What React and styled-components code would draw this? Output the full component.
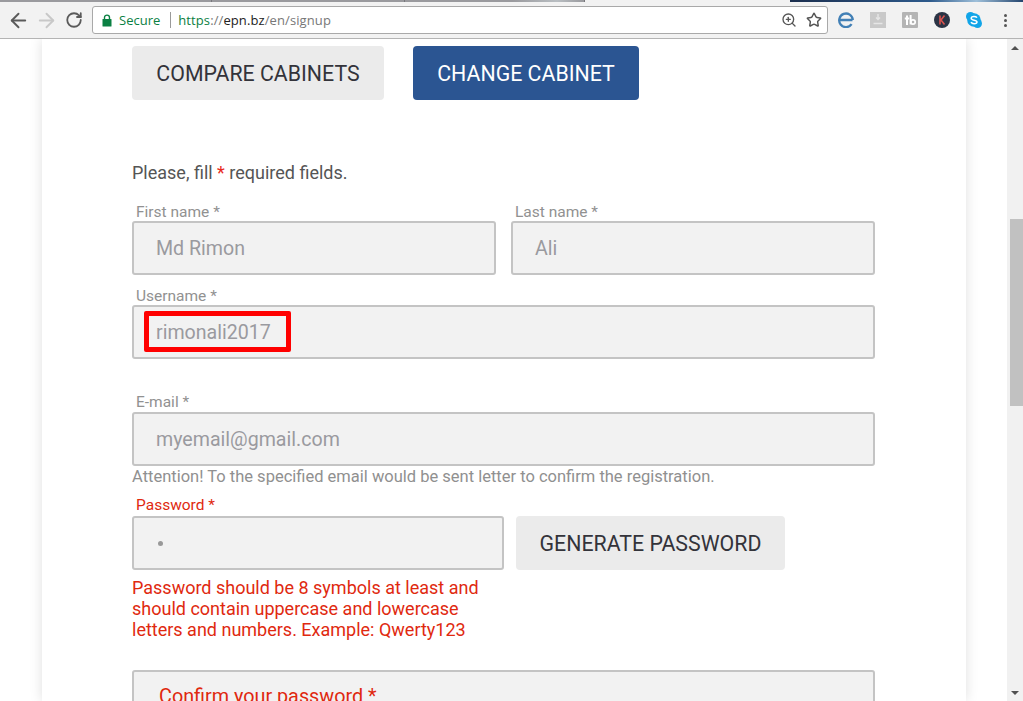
import React from "react";
import styled, { createGlobalStyle } from "styled-components";
import { ArrowLeft, ArrowRight, RotateCw, ZoomIn, Star } from "lucide-react";

const Global = createGlobalStyle`
  html, body { margin: 0; padding: 0; height: 100%; overflow: hidden; background: #fff; }
  * { box-sizing: border-box; }
  body { font-family: Roboto, "Liberation Sans", sans-serif; }
`;

const Page = styled.div`
  width: 1023px; height: 701px; display: flex; flex-direction: column; overflow: hidden;
`;
const TabStrip = styled.div`
  height: 4px; flex: none; display: flex; background: #f2f2f2;
`;
const TabSegment = styled.div`
  width: ${p => p.$w}px; height: 2px; flex: ${p => p.$grow ? 1 : "none"};
  background: ${p => p.$bg};
  border-right: ${p => p.$edge ? "1px solid #77777c" : "none"};
`;
const Toolbar = styled.div`
  height: 35px; flex: none; display: flex; align-items: center; background: #f2f2f2;
  border-bottom: 1px solid #b4b4b4; padding: 0 0 2px 8px;
`;
const NavButton = styled.div`
  width: 20px; height: 20px; margin-right: 8px; display: flex; align-items: center; justify-content: center;
  color: ${p => p.$off ? "#c8c8c8" : "#5a5a5a"};
  svg { flex: none; }
`;
const Omnibox = styled.div`
  width: 736px; height: 28px; background: #fff; border: 1px solid #a9a9a9; border-radius: 3px;
  display: flex; align-items: center; padding: 0 5px 0 9px; font-size: 13px; font-family: "Open Sans", Roboto, sans-serif;
`;
const Secure = styled.span`
  color: #0b8043; margin-left: 7px; padding-right: 10px; border-right: 1px solid #9a9a9a; line-height: 16px; margin-right: 7px;
`;
const Url = styled.span`
  letter-spacing: .1px;
`;
const UrlPart = styled.span`
  color: ${p => p.$c};
`;
const Spacer = styled.div` flex: 1; `;
const OmniIcon = styled.div`
  display: flex; color: #555; margin-left: 9px;
`;
const Extensions = styled.div`
  display: flex; align-items: center; gap: 16px; margin-left: 10px;
`;
const Ext = styled.div`
  width: 16px; height: 16px; display: flex;
`;
const Dots = styled.div`
  display: flex; flex-direction: column; gap: 2px; margin-left: 6px; margin-top: 1px;
  i { width: 3px; height: 3px; border-radius: 50%; background: #555; display: block; }
`;

const Viewport = styled.div`
  flex: 1; min-height: 0; display: flex;
`;
const Main = styled.div`
  flex: 1; min-width: 0; overflow: hidden; padding-left: 42px;
`;
const Card = styled.div`
  width: 924px; height: 100%; background: #fff; box-shadow: 0 0 12px rgba(0,0,0,.13);
  padding: 7px 0 0 90px; overflow: hidden;
`;
const TopActions = styled.div`
  display: flex; gap: 29px;
`;
const Btn = styled.div`
  height: 54px; display: flex; align-items: center; justify-content: center;
  width: ${p => p.$w}px; border-radius: 4px; font-size: 21.33px;
  background: ${p => p.$primary ? "#2b5592" : "#ebebeb"};
  color: ${p => p.$primary ? "#fff" : "#33333a"};
`;
const Hint = styled.p`
  margin: 62px 0 0; font-size: 18px; line-height: 22px; color: #555;
  b { color: #e8291c; font-weight: 400; }
`;
const Row = styled.div`
  display: flex; gap: ${p => p.$gap || 15}px; margin-top: ${p => p.$mt}px; align-items: flex-end;
`;
const Field = styled.div`
  width: ${p => p.$w}px; flex: none;
`;
const Label = styled.div`
  font-size: 15.5px; line-height: ${p => p.$lh || 19}px; height: 19px; padding-left: 4px;
  color: ${p => p.$err ? "#e0290f" : "#919191"};
`;
const Input = styled.div`
  position: relative; height: 54px; background: #f2f2f2; border: 2px solid #c4c4c4; border-radius: 3px;
  padding-left: 22px; display: flex; align-items: center; font-size: 19.6px; color: #9a9a9f;
`;
const Highlight = styled.div`
  position: absolute; left: 10px; top: 4px; width: 147px; height: 41px; border: 5px solid #f00; border-radius: 2px;
`;
const Note = styled.div`
  font-size: 16.5px; line-height: 21px; color: #909090;
`;
const Error = styled.div`
  width: 360px; margin-top: 7px; font-size: 18px; line-height: 21px; color: #e0290f;
`;
const PwdDot = styled.span`
  width: 5px; height: 5px; border-radius: 50%; background: #999; display: block; margin-left: 2px;
`;
const Confirm = styled.div`
  width: 743px; height: 60px; margin-top: 30px; background: #f2f2f2; border: 2px solid #c4c4c4; border-radius: 3px;
  padding: 13px 0 0 25px; font-size: 19.8px; line-height: 24px; color: #e0290f;
`;
const Scrollbar = styled.div`
  width: 16px; flex: none; background: #f1f1f1; display: flex; flex-direction: column; align-items: center;
`;
const Arrow = styled.div`
  flex: none; margin-top: ${p => p.$up ? 7 : 0}px; margin-bottom: ${p => p.$up ? 0 : 6}px;
  width: 0; height: 0; border-left: 4px solid transparent; border-right: 4px solid transparent;
  ${p => p.$up ? "border-bottom: 4px solid #505050;" : "border-top: 4px solid #505050;"}
`;
const Thumb = styled.div`
  flex: none; width: 13px; height: 187px; margin: 169px 0 0 2px; background: #c1c1c1;
`;

const Padlock = () => (
  <svg width="10" height="13" viewBox="0 0 10 13">
    <rect x="0.5" y="5" width="9" height="7.5" rx="0.6" fill="#0b8043" />
    <path d="M2.5 5.5V3.6a2.5 2.5 0 0 1 5 0v1.9" fill="none" stroke="#0b8043" strokeWidth="1.4" />
  </svg>
);
const EIcon = () => (
  <svg width="16" height="16" viewBox="0 0 16 16">
    <path d="M1.5 8h13M14.8 8A6.8 6.8 0 1 0 13.6 12.2" fill="none" stroke="#4280b6" strokeWidth="2.3" />
  </svg>
);
const SaveIcon = () => (
  <svg width="16" height="16" viewBox="0 0 16 16">
    <rect width="16" height="16" fill="#c9c9c9" />
    <path d="M8 2v5M6 5.5 8 7.5l2-2M3.5 11.5h9" fill="none" stroke="#e6e6e6" strokeWidth="1.4" />
  </svg>
);
const TbIcon = () => (
  <svg width="16" height="16" viewBox="0 0 16 16">
    <rect width="16" height="16" rx="1" fill="#b4b4b4" />
    <path d="M5 3.5V13M2.8 6.5h4.4" fill="none" stroke="#fff" strokeWidth="2" />
    <path d="M8.6 3v9.4" stroke="#fff" strokeWidth="2" />
    <circle cx="11" cy="10" r="2.2" fill="none" stroke="#fff" strokeWidth="1.7" />
  </svg>
);
const KIcon = () => (
  <svg width="16" height="16" viewBox="0 0 16 16">
    <circle cx="8" cy="8" r="8" fill="#2b3445" />
    <path d="M6 3.5v9M10.5 3.5 7 8l3.5 4.5" fill="none" stroke="#d9534f" strokeWidth="1.6" />
  </svg>
);
const SkypeIcon = () => (
  <svg width="16" height="16" viewBox="0 0 16 16">
    <circle cx="4.5" cy="4.5" r="4.5" fill="#12a5e8" />
    <circle cx="11.5" cy="11.5" r="4.5" fill="#12a5e8" />
    <circle cx="8" cy="8" r="6.8" fill="#12a5e8" />
    <path d="M11 5.6C10.3 4.7 9.3 4.4 8 4.4c-1.6 0-2.8.7-2.8 1.9 0 2.6 5.8 1.2 5.8 3.7 0 1.1-1.2 1.7-2.9 1.7-1.4 0-2.5-.5-3.1-1.5" fill="none" stroke="#fff" strokeWidth="1.5" />
  </svg>
);

export default function App() {
  return (
    <Page>
      <Global />
      <TabStrip>
        <TabSegment $w={212} $edge $bg="#9a9a9e" />
        <TabSegment $w={193} $edge $bg="#9a9a9e" />
        <TabSegment $w={180} $edge $bg="linear-gradient(90deg,#9a9a9e,#9a9a9e 60%,#b9bec2 85%,#9a9a9e)" />
        <TabSegment $w={205} $bg="#f2f2f2" />
        <TabSegment $grow $bg="linear-gradient(90deg,#1c2f4f,#2d5a8c 60%,#9fc0da 80%,#24456e)" />
      </TabStrip>
      <Toolbar>
        <NavButton><ArrowLeft size={23} strokeWidth={2} /></NavButton>
        <NavButton $off><ArrowRight size={23} strokeWidth={2} /></NavButton>
        <NavButton><RotateCw size={18} strokeWidth={2.4} /></NavButton>
        <Omnibox>
          <Padlock />
          <Secure>Secure</Secure>
          <Url>
            <UrlPart $c="#0b8043">https</UrlPart>
            <UrlPart $c="#777">://</UrlPart>
            <UrlPart $c="#222">epn.bz</UrlPart>
            <UrlPart $c="#777">/en/signup</UrlPart>
          </Url>
          <Spacer />
          <OmniIcon><ZoomIn size={16} /></OmniIcon>
          <OmniIcon><Star size={16} strokeWidth={2.2} /></OmniIcon>
        </Omnibox>
        <Extensions>
          <Ext><EIcon /></Ext>
          <Ext><SaveIcon /></Ext>
          <Ext><TbIcon /></Ext>
          <Ext><KIcon /></Ext>
          <Ext><SkypeIcon /></Ext>
          <Dots><i /><i /><i /></Dots>
        </Extensions>
      </Toolbar>
      <Viewport>
        <Main>
          <Card>
            <TopActions>
              <Btn $w={252}>COMPARE CABINETS</Btn>
              <Btn $w={226} $primary>CHANGE CABINET</Btn>
            </TopActions>
            <Hint>Please, fill <b>*</b> required fields.</Hint>
            <Row $mt={18}>
              <Field $w={364}>
                <Label $lh={20}>First name *</Label>
                <Input>Md Rimon</Input>
              </Field>
              <Field $w={364}>
                <Label $lh={20}>Last name *</Label>
                <Input>Ali</Input>
              </Field>
            </Row>
            <Row $mt={11}>
              <Field $w={743}>
                <Label $lh={20}>Username *</Label>
                <Input>rimonali2017<Highlight /></Input>
              </Field>
            </Row>
            <Row $mt={34}>
              <Field $w={743}>
                <Label>E-mail *</Label>
                <Input>myemail@gmail.com</Input>
                <Note>Attention! To the specified email would be sent letter to confirm the registration.</Note>
              </Field>
            </Row>
            <Row $mt={10} $gap={12}>
              <Field $w={372}>
                <Label $err $lh={17}>Password *</Label>
                <Input><PwdDot /></Input>
              </Field>
              <Btn $w={269}>GENERATE PASSWORD</Btn>
            </Row>
            <Error>Password should be 8 symbols at least and should contain uppercase and lowercase letters and numbers. Example: Qwerty123</Error>
            <Confirm>Confirm your password *</Confirm>
          </Card>
        </Main>
        <Scrollbar>
          <Arrow $up />
          <Thumb />
          <Spacer />
          <Arrow />
        </Scrollbar>
      </Viewport>
    </Page>
  );
}
